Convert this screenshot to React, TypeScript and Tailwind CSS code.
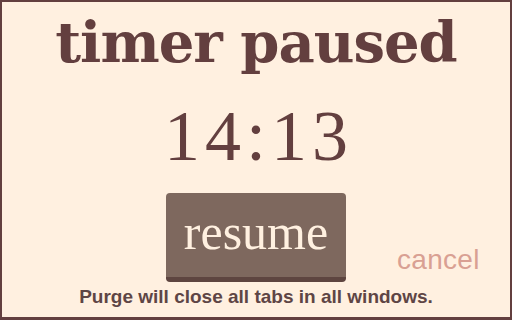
export default function App() {
  return (
    <div className="w-[512px] h-[320px] bg-[#fff0e0] border-2 border-b-[3px] border-[#633f3f] flex flex-col items-center overflow-hidden">
      <h1 className="mt-[8px] text-[56px] leading-[64px] font-bold text-[#633f3f] [font-family:'DejaVu_Serif',serif] tracking-[-1px]">
        timer paused
      </h1>
      <div className="mt-[26px] pl-[5px] text-[72px] leading-[72px] text-[#633f3f] [font-family:'Liberation_Serif',serif] tracking-[5px]">
        14:13
      </div>
      <div className="mt-[21px] w-full grid grid-cols-[1fr_auto_1fr] items-end">
        <div />
        <button className="w-[180px] h-[89px] rounded-[4px] bg-[#7e685e] border-b-[5px] border-[#5e4540] text-[#fff0e0] text-[50px] leading-[50px] [font-family:'Liberation_Serif',serif] flex items-center justify-center pb-[6px]">
          resume
        </button>
        <div className="pl-[51px] pb-[8px] text-[#d9a093] text-[28px] leading-[28px] [font-family:'Liberation_Sans',sans-serif] tracking-[0.3px]">
          cancel
        </div>
      </div>
      <p className="mt-[5px] text-[19px] leading-[20px] font-bold text-[#5e4545] [font-family:'Liberation_Sans',sans-serif]">
        Purge will close all tabs in all windows.
      </p>
    </div>
  );
}
